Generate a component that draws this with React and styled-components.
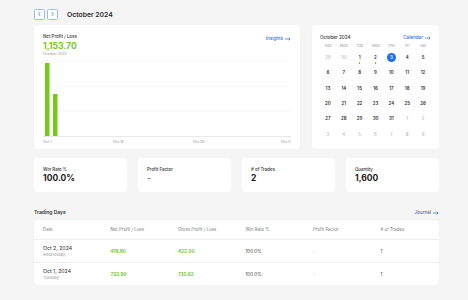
import styled, { createGlobalStyle } from "styled-components"

const GlobalStyle = createGlobalStyle`
body {
  margin: 0;
  background: #f5f5f5;
  font-family: "Inter", "Liberation Sans", sans-serif;
  color: #1c1c1c;
}
`

const GREEN = "#74c91c"
const BLUE = "#2f6fe8"

const calendarDays = [
  [29, 30, 1, 2, 3, 4, 5],
  [6, 7, 8, 9, 10, 11, 12],
  [13, 14, 15, 16, 17, 18, 19],
  [20, 21, 22, 23, 24, 25, 26],
  [27, 28, 29, 30, 31, 1, 2],
  [3, 4, 5, 6, 7, 8, 9],
]

const stats = [
  { label: "Win Rate %", value: "100.0%" },
  { label: "Profit Factor", value: "-", muted: true },
  { label: "# of Trades", value: "2" },
  { label: "Quantity", value: "1,600" },
]

const rows = [
  { date: "Oct 2, 2024", day: "Wednesday", net: "419.80", gross: "422.00" },
  { date: "Oct 1, 2024", day: "Tuesday", net: "733.90", gross: "735.62" },
]

const Arrow = () => (
  <svg width="6" height="4" viewBox="0 0 6 4">
    <path d="M0 2h5M3.6 0.6L5 2 3.6 3.4" stroke={BLUE} strokeWidth="0.7" fill="none" />
  </svg>
)

const Chevron = ({ dir }) => (
  <svg width="5" height="6" viewBox="0 0 5 6">
    <path d={dir === "left" ? "M3.2 1L1.6 3l1.6 2" : "M1.8 1l1.6 2-1.6 2"} stroke={BLUE} strokeWidth="0.7" fill="none" />
  </svg>
)

const Chart = () => (
  <svg width="248" height="90" viewBox="0 0 248 90">
    {[5, 30, 55].map((y) => (
      <line key={y} x1="0" x2="248" y1={y} y2={y} stroke="#e4e4e4" strokeWidth="0.6" strokeDasharray="1 1" />
    ))}
    <line x1="0" x2="248" y1="80.5" y2="80.5" stroke="#e2e2e2" strokeWidth="0.8" />
    <rect x="2" y="7" width="4.5" height="73" fill={GREEN} />
    <rect x="10" y="38" width="4.5" height="42" fill={GREEN} />
    {[["Oct 1", 0], ["Oct 10", 70], ["Oct 20", 150], ["Oct 31", 238]].map(([t, x]) => (
      <text key={t} x={x} y="87" fontSize="3.6" fill="#8a8a8a" fontFamily="Inter, sans-serif">{t}</text>
    ))}
  </svg>
)

export default function App() {
  return (
    <Page>
      <GlobalStyle />
      <Header>
        <NavButton><Chevron dir="left" /></NavButton>
        <NavButton><Chevron dir="right" /></NavButton>
        <Title>October 2024</Title>
      </Header>

      <TopRow>
        <Card>
          <ChartHead>
            <div>
              <SmallLabel>Net Profit / Loss</SmallLabel>
              <BigGreen>1,153.70</BigGreen>
              <SubLabel>October 2024</SubLabel>
            </div>
            <LinkText>Insights <Arrow /></LinkText>
          </ChartHead>
          <ChartArea><Chart /></ChartArea>
        </Card>

        <CalendarCard>
          <CalHead>
            <CalTitle>October 2024</CalTitle>
            <LinkText>Calendar <Arrow /></LinkText>
          </CalHead>
          <CalGrid>
            {["Sun", "Mon", "Tue", "Wed", "Thu", "Fri", "Sat"].map((d) => (
              <WeekDay key={d}>{d}</WeekDay>
            ))}
            {calendarDays.map((week, wi) =>
              week.map((d, di) => {
                const outside = (wi === 0 && d > 20) || (wi >= 4 && d < 10)
                const today = wi === 0 && d === 3
                const traded = wi === 0 && (d === 1 || d === 2)
                return (
                  <DayCell key={`${wi}-${di}`}>
                    <DayNum $outside={outside} $today={today}>{d}</DayNum>
                    {traded && <Dot />}
                  </DayCell>
                )
              })
            )}
          </CalGrid>
        </CalendarCard>
      </TopRow>

      <StatsRow>
        {stats.map((s) => (
          <StatCard key={s.label}>
            <SmallLabel>{s.label}</SmallLabel>
            <StatValue $muted={s.muted}>{s.value}</StatValue>
          </StatCard>
        ))}
      </StatsRow>

      <SectionHead>
        <SectionTitle>Trading Days</SectionTitle>
        <LinkText>Journal <Arrow /></LinkText>
      </SectionHead>

      <Table>
        <HeadRow>
          <span>Date</span>
          <span>Net Profit / Loss</span>
          <span>Gross Profit / Loss</span>
          <span>Win Rate %</span>
          <span>Profit Factor</span>
          <span># of Trades</span>
        </HeadRow>
        {rows.map((r) => (
          <BodyRow key={r.date}>
            <DateCell>
              <span>{r.date}</span>
              <Weekday>{r.day}</Weekday>
            </DateCell>
            <GreenCell>{r.net}</GreenCell>
            <GreenCell>{r.gross}</GreenCell>
            <Cell>100.0%</Cell>
            <Cell $muted>-</Cell>
            <Cell>1</Cell>
          </BodyRow>
        ))}
      </Table>
    </Page>
  )
}

const Page = styled.div`
width: 405px;
padding: 8px 0 0 34px;
`

const Header = styled.div`
display: flex;
align-items: center;
gap: 2px;
height: 12px;
`

const NavButton = styled.div`
width: 9px;
height: 9px;
border: 0.8px solid #9cbcf3;
border-radius: 1.5px;
display: flex;
align-items: center;
justify-content: center;
background: #fff;
`

const Title = styled.div`
margin-left: 7px;
font-size: 6.8px;
font-weight: 600;
color: #2a2a2a;
`

const TopRow = styled.div`
display: grid;
grid-template-columns: 266px 127px;
gap: 12px;
margin-top: 5px;
`

const Card = styled.div`
background: #fff;
border-radius: 4px;
box-shadow: 0 0 2px rgba(0, 0, 0, 0.04);
height: 124px;
padding: 9px 9px 0 9px;
box-sizing: border-box;
`

const ChartHead = styled.div`
display: flex;
justify-content: space-between;
align-items: flex-start;
`

const SmallLabel = styled.div`
font-size: 4.4px;
font-weight: 500;
color: #333;
`

const BigGreen = styled.div`
font-size: 8.6px;
font-weight: 700;
color: ${GREEN};
margin-top: 1.5px;
line-height: 10px;
`

const SubLabel = styled.div`
font-size: 3.6px;
color: #9a9a9a;
margin-top: 1px;
`

const LinkText = styled.div`
display: flex;
align-items: center;
gap: 2px;
font-size: 4.6px;
color: ${BLUE};
font-weight: 500;
margin-top: 2px;
`

const ChartArea = styled.div`
margin-top: 0;
line-height: 0;
`

const CalendarCard = styled(Card)`
padding: 8px 8px 0 8px;
`

const CalHead = styled.div`
display: flex;
justify-content: space-between;
align-items: center;
`

const CalTitle = styled.div`
font-size: 4.6px;
font-weight: 500;
color: #333;
margin-top: 2px;
`

const CalGrid = styled.div`
display: grid;
grid-template-columns: repeat(7, 1fr);
grid-template-rows: 8px repeat(6, 15.3px);
margin-top: 2px;
`

const WeekDay = styled.div`
text-align: center;
font-size: 3.8px;
color: #9a9a9a;
line-height: 8px;
`

const DayCell = styled.div`
display: flex;
flex-direction: column;
align-items: center;
justify-content: center;
position: relative;
`

const DayNum = styled.div`
width: 9px;
height: 9px;
border-radius: 50%;
display: flex;
align-items: center;
justify-content: center;
font-size: 4.4px;
color: ${(p) => (p.$today ? "#fff" : p.$outside ? "#a9a9a9" : "#2b2b2b")};
background: ${(p) => (p.$today ? "#1e6ff0" : "transparent")};
font-weight: ${(p) => (p.$outside ? 400 : 600)};
`

const Dot = styled.div`
position: absolute;
bottom: 1.5px;
width: 1.6px;
height: 1.6px;
background: ${GREEN};
`

const StatsRow = styled.div`
display: grid;
grid-template-columns: repeat(4, 93px);
gap: 11px;
margin-top: 9px;
`

const StatCard = styled.div`
background: #fff;
border-radius: 4px;
height: 34px;
box-sizing: border-box;
padding: 9px 8px 0 9px;
`

const StatValue = styled.div`
font-size: 8.5px;
font-weight: 700;
color: ${(p) => (p.$muted ? "#888" : "#1b1b1b")};
margin-top: 1px;
`

const SectionHead = styled.div`
display: flex;
justify-content: space-between;
align-items: center;
width: 405px;
margin-top: 16px;
`

const SectionTitle = styled.div`
font-size: 5px;
font-weight: 600;
color: #333;
`

const Table = styled.div`
margin-top: 5px;
width: 405px;
background: #fff;
border-radius: 4px;
box-shadow: 0 0 1px rgba(0, 0, 0, 0.12);
overflow: hidden;
`

const HeadRow = styled.div`
display: grid;
grid-template-columns: repeat(5, 67.5px) 1fr;
padding-left: 9px;
height: 19px;
align-items: center;
font-size: 4.4px;
color: #777;
border-bottom: 1px solid #eeeeee;
`

const BodyRow = styled.div`
display: grid;
grid-template-columns: repeat(5, 67.5px) 1fr;
padding-left: 9px;
height: 22px;
align-items: center;
font-size: 4.6px;
color: #444;
border-bottom: 1px solid #eeeeee;
&:last-child {
  border-bottom: none;
}
`

const DateCell = styled.div`
display: flex;
flex-direction: column;
font-size: 5.2px;
color: #2a2a2a;
`

const Weekday = styled.span`
font-size: 4px;
color: #a0a0a0;
margin-top: 0.5px;
`

const GreenCell = styled.div`
color: ${GREEN};
font-weight: 700;
font-size: 4.6px;
`

const Cell = styled.div`
color: ${(p) => (p.$muted ? "#aaa" : "#444")};
`
